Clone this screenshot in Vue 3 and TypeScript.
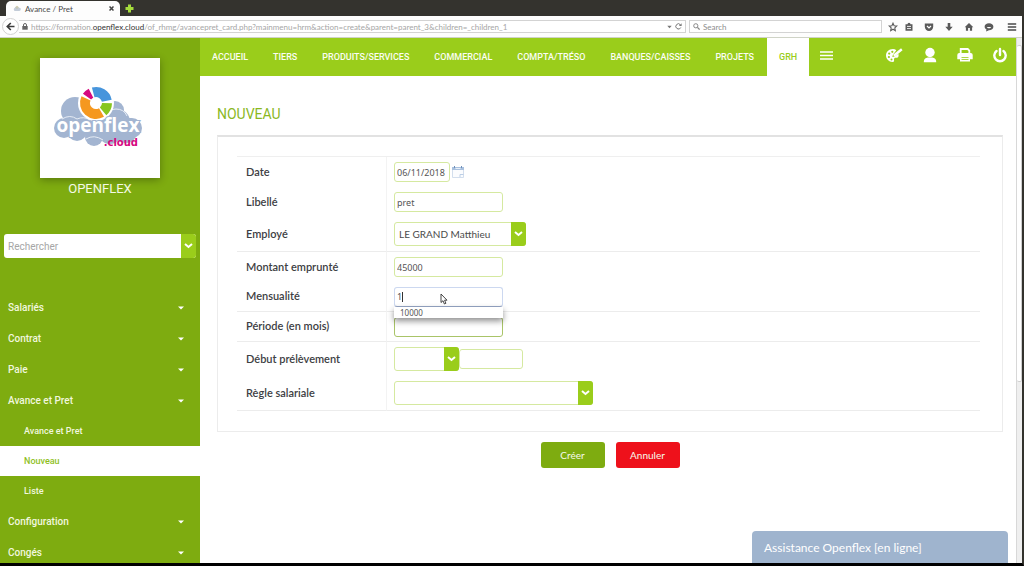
<script setup lang="ts">
import { ref } from 'vue'

const topLinks: string[] = [
  'ACCUEIL',
  'TIERS',
  'PRODUITS/SERVICES',
  'COMMERCIAL',
  'COMPTA/TRÉSO',
  'BANQUES/CAISSES',
  'PROJETS',
  'GRH',
]
const activeTop = 'GRH'

interface SideItem {
  label: string
  sub?: boolean
  active?: boolean
}
const sideItems: SideItem[] = [
  { label: 'Salariés' },
  { label: 'Contrat' },
  { label: 'Paie' },
  { label: 'Avance et Pret' },
  { label: 'Avance et Pret', sub: true },
  { label: 'Nouveau', sub: true, active: true },
  { label: 'Liste', sub: true },
  { label: 'Configuration' },
  { label: 'Congés' },
]

const date = ref('06/11/2018')
const libelle = ref('pret')
const employe = ref('LE GRAND Matthieu')
const montant = ref('45000')
const mensualite = ref('1')
const periode = ref('')
const mois = ref('')
const annee = ref('')
const regle = ref('')
</script>

<template>
  <div class="window">
    <header class="chrome">
      <div class="tabs">
        <div class="tab">
          <svg class="fav" viewBox="0 0 10 8" aria-hidden="true">
            <path d="M2 7a2 2 0 0 1 0-3.500A3 3 0 0 1 7.500 3 2 2 0 0 1 8 7z" fill="#c3ccd8" />
            <circle cx="5" cy="2.500" r="1.300" fill="none" stroke="#c9c08a" stroke-width=".8" />
          </svg>
          <span class="tab-title">Avance / Pret</span>
          <button class="bare" aria-label="Fermer l'onglet">
            <svg width="5" height="5" viewBox="0 0 5 5"><path d="M.5.5l4 4M4.500.5l-4 4" stroke="#444" stroke-width="1.500" /></svg>
          </button>
        </div>
        <button class="bare plus" aria-label="Nouvel onglet">
          <svg width="9" height="9" viewBox="0 0 9 9"><path d="M3 .5h3V3h2.500v3H6v2.500H3V6H.5V3H3z" fill="#a5dc3c" /></svg>
        </button>
      </div>
      <div class="toolbar">
        <button class="bare back" aria-label="Précédent">
          <svg width="9" height="9" viewBox="0 0 9 9"><path d="M8.500 4.500H1.500M4.800 1L1.300 4.500 4.800 8" fill="none" stroke="#3c3c3c" stroke-width="1.700" /></svg>
        </button>
        <div class="address">
          <svg width="6" height="7" viewBox="0 0 6 7" aria-hidden="true">
            <path d="M1.500 3V2a1.500 1.500 0 0 1 3 0v1" fill="none" stroke="#666" />
            <path d="M.3 3h5.400v3.700H.3z" fill="#666" />
          </svg>
          <span class="url">https://formation.<b>openflex.cloud</b>/of_rhmg/avancepret_card.php?mainmenu=hrm&amp;action=create&amp;parent=parent_3&amp;children=_children_1</span>
          <svg width="5" height="4" viewBox="0 0 5 4" aria-hidden="true"><path d="M.3.8h4.400L2.500 3.300z" fill="#777" /></svg>
          <svg width="7" height="7" viewBox="0 0 7 7" aria-hidden="true">
            <path d="M5.800 4.500A2.600 2.600 0 1 1 5.400 1.700" fill="none" stroke="#777" />
            <path d="M6.600.2v2.800H3.900z" fill="#777" />
          </svg>
        </div>
        <label class="search">
          <svg width="7" height="7" viewBox="0 0 7 7" aria-hidden="true">
            <circle cx="2.800" cy="2.800" r="2.100" fill="none" stroke="#888" />
            <path d="M4.400 4.400l2.200 2.200" stroke="#888" stroke-width="1.300" />
          </svg>
          <input type="text" placeholder="Search" aria-label="Search" />
        </label>
        <nav class="tools" aria-label="Outils">
          <svg viewBox="0 0 10 10"><path d="M5 1.200l1.100 2.500 2.700.3-2 1.900.5 2.700L5 7.200 2.700 8.600l.5-2.700-2-1.900 2.700-.3z" fill="none" stroke="#5a5a5a" stroke-width="1.100" /></svg>
          <svg viewBox="0 0 10 10"><path d="M1.500 2.200h2A1.500 1.500 0 0 1 6.500 2.200h2v6.600h-7z" fill="#5a5a5a" /><path d="M3 4.400h4M3 6.600h4" stroke="#fff" stroke-width=".9" /></svg>
          <svg viewBox="0 0 10 10"><path d="M.8 1.500h8.400v3.300a4.200 4.200 0 0 1-8.400 0z" fill="#5a5a5a" /><path d="M3 4l2 2 2-2" fill="none" stroke="#fff" stroke-width="1.200" /></svg>
          <svg viewBox="0 0 10 10"><path d="M3.700 1h2.600v3.700h2.400L5 8.900 1.300 4.700h2.400z" fill="#5a5a5a" /></svg>
          <svg viewBox="0 0 10 10"><path d="M5 1l4.300 4.200H8.100v3.600H5.900V6H4.100v2.800H1.900V5.200H.7z" fill="#5a5a5a" /></svg>
          <svg viewBox="0 0 10 10"><path d="M5 1.200c2.500 0 4.400 1.500 4.400 3.500S7.500 8.200 5 8.200L2 9.500l.5-2C1.300 6.900.6 5.900.6 4.700c0-2 1.900-3.500 4.400-3.500z" fill="#5a5a5a" /><path d="M2.800 5c.8 1.700 3.600 1.700 4.400 0z" fill="#fff" /></svg>
          <svg viewBox="0 0 10 10"><path d="M.8 2h8.400M.8 5h8.400M.8 8h8.400" stroke="#4a4a4a" stroke-width="1.700" /></svg>
        </nav>
      </div>
    </header>

    <div class="page">
      <aside class="side">
        <div class="brand">
          <svg class="logo" viewBox="0 0 120 120" role="img" aria-label="openflex.cloud">
            <g fill="#a3b5d1">
              <circle cx="35" cy="53" r="14" />
              <circle cx="75" cy="52" r="9" />
              <circle cx="24" cy="70" r="10" />
              <circle cx="37" cy="73" r="10" />
              <circle cx="54" cy="79" r="9" />
              <circle cx="70" cy="74" r="12" />
              <circle cx="86" cy="74" r="11" />
              <circle cx="92" cy="70" r="10" />
              <circle cx="77" cy="64" r="13" />
              <path d="M24 60h68v17H24z" />
            </g>
            <path d="M65 60q2-9 11-9 8 0 11 7" fill="none" stroke="#e6ecf5" />
            <path d="M22 61q8-5 15 0M46 81q8-5 17 1M37 61q7-3 13 1" fill="none" stroke="#e6ecf5" />
            <circle cx="56" cy="45" r="18" fill="#fff" />
            <g fill="none" stroke-width="10">
              <path d="M53.200 34.400A11 11 0 0 1 66.800 42.700" stroke="#4795dc" />
              <path d="M67 45.200A11 11 0 0 1 63.100 53.400" stroke="#86c620" />
              <path d="M61.500 54.500A11 11 0 0 1 46 40.400" stroke="#f5981f" />
              <path d="M47 38.700A11 11 0 0 1 51 35.200" stroke="#d6087f" />
            </g>
            <text class="logo-main" x="58" y="74" text-anchor="middle">openflex</text>
            <text class="logo-sub" x="98" y="88" text-anchor="end">.cloud</text>
          </svg>
          <div class="brand-name">OPENFLEX</div>
        </div>

        <div class="finder">
          <input type="text" placeholder="Rechercher" aria-label="Rechercher" />
          <button class="chev" aria-label="Choisir la recherche">
            <svg width="9" height="6" viewBox="0 0 9 6"><path d="M1 1l3.500 3L8 1" fill="none" stroke="#fff" stroke-width="2" /></svg>
          </button>
        </div>

        <nav class="menu" aria-label="GRH">
          <a v-for="(item, i) in sideItems" :key="i" href="#" :class="{ sub: item.sub, active: item.active }">
            <span>{{ item.label }}</span>
            <svg v-if="!item.sub" width="6" height="4" viewBox="0 0 6 4" aria-hidden="true"><path d="M0 .5h6L3 3.500z" fill="#fff" /></svg>
          </a>
        </nav>
      </aside>

      <div class="body">
        <nav class="top" aria-label="Principal">
          <a v-for="link in topLinks" :key="link" href="#" :class="{ active: link === activeTop }">{{ link }}</a>
          <button class="bare burger" aria-label="Menu">
            <svg width="13" height="9" viewBox="0 0 13 9"><path d="M0 1h13M0 4.500h13M0 8h13" stroke="#fff" stroke-width="1.500" /></svg>
          </button>
          <div class="actions">
            <button class="bare" aria-label="Thème">
              <svg width="18" height="16" viewBox="0 0 18 16">
                <path d="M8 2C3.500 2 1 5 1 8.500S4 15 7.500 15c2 0 1.600-1.600 1.500-2.600-.1-1.300.8-1.800 2-1.700 1.600.1 2.600-.6 2.600-2.300 0-.6-.1-1-.3-1.600L9.500 9.500 7.300 10l.6-2.300 3.400-4.500C10.400 2.400 9.300 2 8 2z" fill="#fff" />
                <path d="M16.800 2.200l-8 6.600" stroke="#fff" stroke-width="2.400" />
                <g fill="#9acd1b"><circle cx="7.300" cy="4.800" r="1.100" /><circle cx="4.200" cy="6.600" r="1.100" /><circle cx="3.900" cy="10" r="1.100" /><circle cx="6.500" cy="12.500" r="1" /></g>
              </svg>
            </button>
            <button class="bare" aria-label="Profil">
              <svg width="14" height="16" viewBox="0 0 14 16">
                <circle cx="7" cy="5.500" r="4.700" fill="#fff" />
                <path d="M.8 15.200c0-3.500 1.800-4.200 4-4.600h4.400c2.200.4 4 1.100 4 4.600z" fill="#fff" />
              </svg>
            </button>
            <button class="bare" aria-label="Imprimer">
              <svg width="16" height="16" viewBox="0 0 16 16">
                <path d="M3.700 6.500V2h7l1.600 1.600v2.900" fill="none" stroke="#fff" stroke-width="1.800" />
                <path d="M2.300 6h11.400Q15.700 6 15.700 8v4.300H13v2.200H3v-2.200H.3V8q0-2 2-2z" fill="#fff" />
                <path d="M4.500 10.500h7M4.500 12.500h7" stroke="#9acd1b" stroke-width=".8" />
              </svg>
            </button>
            <button class="bare" aria-label="Déconnexion">
              <svg width="14" height="16" viewBox="0 0 14 16">
                <path d="M3.500 4a5.700 5.700 0 1 0 7 0" fill="none" stroke="#fff" stroke-width="2.400" stroke-linecap="round" />
                <path d="M7 2v6" stroke="#fff" stroke-width="2.400" stroke-linecap="round" />
              </svg>
            </button>
          </div>
        </nav>

        <main class="content">
          <h1>NOUVEAU</h1>
          <form @submit.prevent>
            <div class="panel">
              <table>
                <tbody>
                  <tr>
                    <th scope="row"><label for="date">Date</label></th>
                    <td>
                      <div class="line">
                        <input id="date" v-model="date" class="field short" type="text" />
                        <button type="button" class="bare cal" aria-label="Ouvrir le calendrier">
                          <svg width="12" height="12" viewBox="0 0 12 12">
                            <path d="M.5 1.500h11v10H.5z" fill="#fbfcfe" stroke="#d3deed" />
                            <path d="M0 1h12v3H0z" fill="#a9c1df" />
                            <path d="M2.500 0v2M9.500 0v2" stroke="#6f8fb8" />
                            <path d="M3.500 2.500h5" stroke="#e9f0f8" />
                            <path d="M8 11V8.500h3.500" fill="none" stroke="#bccfe6" />
                          </svg>
                        </button>
                      </div>
                    </td>
                  </tr>
                  <tr>
                    <th scope="row"><label for="libelle">Libellé</label></th>
                    <td><input id="libelle" v-model="libelle" class="field" type="text" /></td>
                  </tr>
                  <tr class="tall ruled">
                    <th scope="row"><label for="employe">Employé</label></th>
                    <td>
                      <div class="pick medium">
                        <select id="employe" v-model="employe"><option>LE GRAND Matthieu</option></select>
                        <span class="chev"><svg width="9" height="6" viewBox="0 0 9 6"><path d="M1 1l3.500 3L8 1" fill="none" stroke="#fff" stroke-width="2" /></svg></span>
                      </div>
                    </td>
                  </tr>
                  <tr>
                    <th scope="row"><label for="montant">Montant emprunté</label></th>
                    <td><input id="montant" v-model="montant" class="field" type="text" /></td>
                  </tr>
                  <tr class="ruled">
                    <th scope="row"><label for="mensualite">Mensualité</label></th>
                    <td>
                      <div class="suggest">
                        <input id="mensualite" v-model="mensualite" class="field focused" type="text" />
                        <span class="caret"></span>
                        <div class="options">10000</div>
                        <svg class="pointer" width="8" height="12" viewBox="0 0 8 12" aria-hidden="true">
                          <path d="M1 1v8.500l2-1.800 1.400 3.300 1.500-.7L4.600 7.200H7z" fill="#fff" stroke="#333" stroke-width=".9" />
                        </svg>
                      </div>
                    </td>
                  </tr>
                  <tr class="ruled">
                    <th scope="row"><label for="periode">Période (en mois)</label></th>
                    <td><input id="periode" v-model="periode" class="field dark" type="text" /></td>
                  </tr>
                  <tr class="tall">
                    <th scope="row"><label for="mois">Début prélèvement</label></th>
                    <td>
                      <div class="line">
                        <div class="pick small">
                          <select id="mois" v-model="mois"><option value=""></option></select>
                          <span class="chev"><svg width="9" height="6" viewBox="0 0 9 6"><path d="M1 1l3.500 3L8 1" fill="none" stroke="#fff" stroke-width="2" /></svg></span>
                        </div>
                        <input v-model="annee" class="field year" type="text" aria-label="Année" />
                      </div>
                    </td>
                  </tr>
                  <tr class="tall ruled">
                    <th scope="row"><label for="regle">Règle salariale</label></th>
                    <td>
                      <div class="pick large">
                        <select id="regle" v-model="regle"><option value=""></option></select>
                        <span class="chev"><svg width="9" height="6" viewBox="0 0 9 6"><path d="M1 1l3.500 3L8 1" fill="none" stroke="#fff" stroke-width="2" /></svg></span>
                      </div>
                    </td>
                  </tr>
                </tbody>
              </table>
            </div>
            <div class="buttons">
              <button type="submit" class="btn">Créer</button>
              <button type="button" class="btn cancel">Annuler</button>
            </div>
          </form>
        </main>
        <button class="chat">Assistance Openflex [en ligne]</button>
      </div>
      <div class="scroll" aria-hidden="true"><div class="thumb"></div></div>
    </div>
  </div>
</template>

<style>
body {
  margin: 0;
  background: #000;
}
</style>

<style scoped>
* {
  box-sizing: border-box;
}
svg {
  display: block;
  flex: none;
}
a {
  text-decoration: none;
}
button,
input,
select {
  font: inherit;
  margin: 0;
}
.window {
  display: flex;
  flex-direction: column;
  height: 100vh;
  overflow: hidden;
  border-right: 2px solid #33322d;
  border-bottom: 3px solid #000;
  font-family: Roboto, 'Noto Sans', sans-serif;
  color: #3d4043;
}
.bare {
  display: flex;
  align-items: center;
  justify-content: center;
  padding: 0;
  border: 0;
  background: none;
}

.chrome {
  flex: none;
  font-family: Lato, 'Noto Sans', sans-serif;
  font-size: 8px;
  background: #fdfdfd;
}
.tabs {
  display: flex;
  height: 16px;
  padding-left: 6px;
  background: #34332e;
}
.tab {
  display: flex;
  align-items: center;
  gap: 4px;
  width: 114px;
  margin-top: 1px;
  padding: 0 6px 0 7px;
  border-radius: 5px 5px 0 0;
  background: #fdfdfd;
}
.fav {
  width: 8px;
  height: 7px;
}
.tab-title {
  flex: 1;
  color: #4a4a4a;
}
.plus {
  margin-left: 5px;
}
.toolbar {
  display: flex;
  align-items: center;
  height: 22px;
  padding: 0 5px 0 2px;
  border-bottom: 1px solid #cfd3c6;
}
.back {
  width: 17px;
  height: 17px;
  border: 1px solid #d2d2d2;
  border-radius: 50%;
  background: #fff;
}
.address {
  display: flex;
  flex: 1;
  align-items: center;
  gap: 3px;
  height: 13px;
  padding: 0 3px;
  border: 1px solid #d3d3d3;
  border-left: 0;
  background: #fff;
}
.url {
  flex: 1;
  overflow: hidden;
  white-space: nowrap;
  color: #a6a6a6;
}
.url b {
  font-weight: 400;
  color: #333;
}
.search {
  display: flex;
  align-items: center;
  gap: 3px;
  width: 193px;
  height: 13px;
  margin-left: 3px;
  padding: 0 3px;
  border: 1px solid #d3d3d3;
  background: #fff;
}
.search input {
  min-width: 0;
  flex: 1;
  padding: 0;
  border: 0;
  background: none;
}
.search input::placeholder {
  color: #8d8d8d;
}
.tools {
  display: flex;
  gap: 10px;
  margin-left: 6px;
}
.tools svg {
  width: 10px;
  height: 10px;
}
.tools svg:first-child {
  margin-right: -4px;
}
.tools svg:last-child {
  margin-left: 3px;
}

.page {
  display: flex;
  flex: 1;
  min-height: 0;
  background: #fff;
}
.side {
  flex: none;
  width: 200px;
  overflow: hidden;
  background: #7eac10;
  color: #f4f9e6;
}
.brand {
  display: flex;
  flex-direction: column;
  align-items: center;
  padding-top: 20px;
}
.logo {
  width: 120px;
  height: 120px;
  background: #fff;
  box-shadow: 0 2px 8px rgba(0, 0, 0, 0.3);
}
.logo-main {
  font: 700 19px 'Open Sans', 'Noto Sans', sans-serif;
  fill: #fff;
  stroke: #a3b5d1;
  stroke-width: 2px;
  paint-order: stroke;
}
.logo-sub {
  font: 700 10px 'DejaVu Sans', sans-serif;
  fill: #d6087f;
}
.brand-name {
  font-size: 13px;
  line-height: 22px;
}
.finder {
  display: flex;
  height: 24px;
  margin: 34px 4px 0;
  overflow: hidden;
  border-radius: 3px;
  background: #fff;
}
.finder input {
  min-width: 0;
  flex: 1;
  padding: 0 4px;
  border: 0;
  background: none;
  font-size: 10px;
}
.finder input::placeholder {
  color: #a6a6a6;
}
.chev {
  display: flex;
  align-items: center;
  justify-content: center;
  width: 15px;
  padding: 0;
  border: 0;
  background: #9acd1b;
}
.menu {
  margin-top: 34px;
}
.menu a {
  display: flex;
  align-items: center;
  justify-content: space-between;
  height: 31px;
  padding: 0 16px 0 8px;
  color: #f1f7df;
  font-size: 10px;
  font-weight: 500;
}
.menu a.sub {
  height: 30px;
  padding-left: 24px;
  font-size: 9px;
}
.menu a.active {
  background: #fff;
  color: #8fbf1e;
}

.body {
  position: relative;
  flex: 1;
  min-width: 0;
}
.top {
  display: flex;
  align-items: center;
  gap: 1px;
  height: 38px;
  background: #9acd1b;
}
.top a {
  padding: 0 12px;
  color: #fbfdf3;
  font-size: 9px;
  font-weight: 500;
  line-height: 38px;
}
.top a.active {
  background: #fff;
  color: #9acd1b;
}
.top .bare {
  padding-bottom: 4px;
}
.burger {
  margin-left: 10px;
}
.actions {
  display: flex;
  align-items: center;
  gap: 20px;
  margin-left: auto;
  padding-right: 9px;
}
.content {
  padding: 27px 13px 0 17px;
  font-family: Lato, 'Noto Sans', sans-serif;
}
h1 {
  margin: 0 0 10px;
  color: #8bb81f;
  font-family: Roboto, sans-serif;
  font-size: 14px;
  font-weight: 400;
  line-height: 22px;
}
.panel {
  padding: 19px 22px 20px 19px;
  border: 1px solid #ececec;
  border-top: 2px solid #e2e2e2;
}
table {
  width: 100%;
  border-top: 1px solid #efefef;
  border-spacing: 0;
}
th,
td {
  height: 30px;
  padding: 0 7px;
  font-weight: 400;
  text-align: left;
  vertical-align: middle;
}
th {
  width: 150px;
  padding: 0 7px 2px 9px;
  border-right: 1px solid #f3f3f3;
  font-size: 11px;
  font-weight: 600;
}
.tall th,
.tall td {
  height: 34px;
}
.ruled th,
.ruled td {
  border-bottom: 1px solid #ececec;
}
.tall.ruled th,
.tall.ruled td {
  height: 35px;
}
.line {
  display: flex;
  align-items: center;
}
.field {
  display: block;
  width: 109px;
  height: 20px;
  padding: 0 2px;
  border: 1px solid #d5e9a0;
  border-radius: 3px;
  background: #fff;
  color: #555;
  font-family: 'Noto Sans', sans-serif;
  font-size: 9px;
}
.short {
  width: 56px;
}
.cal {
  margin-left: 2px;
}
.year {
  width: 64px;
}
.focused {
  border-color: #ccd8f0;
  border-bottom-color: #98a8c8;
}
.dark {
  border-color: #a9c468;
}
.pick {
  display: grid;
  height: 24px;
}
.pick select,
.pick .chev {
  grid-area: 1 / 1;
}
.pick select {
  min-width: 0;
  padding: 0 18px 0 4px;
  border: 1px solid #d5e9a0;
  border-radius: 3px;
  background: #fff;
  color: #4b4b4b;
  font-size: 10px;
  appearance: none;
}
.pick .chev {
  justify-self: end;
  border-radius: 0 3px 3px 0;
  pointer-events: none;
}
.medium {
  width: 132px;
}
.small {
  width: 65px;
}
.large {
  width: 199px;
}
.suggest {
  position: relative;
  width: 109px;
}
.caret {
  position: absolute;
  top: 5px;
  left: 8px;
  width: 1px;
  height: 10px;
  background: #333;
}
.options {
  position: absolute;
  z-index: 2;
  top: 100%;
  left: 0;
  width: 100%;
  padding-left: 6px;
  background: #fff;
  box-shadow: 0 3px 6px rgba(0, 0, 0, 0.45);
  color: #555;
  font-family: 'Noto Sans', sans-serif;
  font-size: 8px;
  line-height: 11px;
}
.pointer {
  position: absolute;
  z-index: 3;
  top: 6px;
  left: 46px;
}
.buttons {
  display: flex;
  justify-content: center;
  gap: 11px;
  margin-top: 10px;
}
.btn {
  width: 64px;
  height: 26px;
  border: 0;
  border-radius: 3px;
  background: #7eac10;
  color: #f6faec;
  font-size: 10px;
}
.cancel {
  background: #ee111b;
}
.chat {
  position: absolute;
  right: 8px;
  bottom: 0;
  width: 256px;
  height: 32px;
  padding: 0 12px;
  border: 0;
  border-radius: 4px 4px 0 0;
  background: #9fb4ce;
  color: #fff;
  font-family: Lato, sans-serif;
  font-size: 12px;
  text-align: left;
}
.scroll {
  flex: none;
  width: 6px;
  padding-top: 7px;
  border-left: 1px solid #d8d8d8;
  background: #efefef;
}
.thumb {
  height: 65%;
  border: 1px solid #cfcfcf;
  border-left: 0;
  border-radius: 2px;
  background: #fff;
}
</style>
